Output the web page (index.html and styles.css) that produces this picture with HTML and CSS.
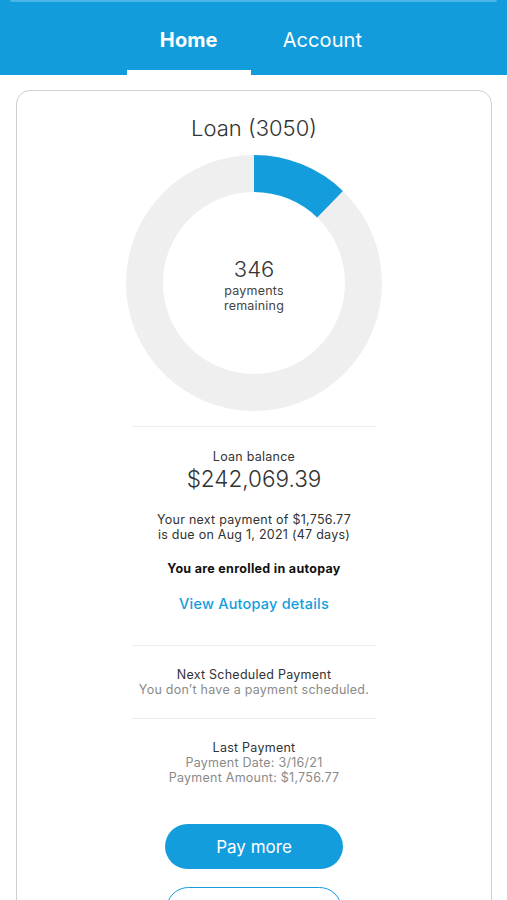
FILE: index.html
```html
<!DOCTYPE html>
<html>
<head>
<meta charset="utf-8">
<link rel="stylesheet" href="styles.css">
</head>
<body>
<header class="header">
  <div class="topstrip"></div>
  <nav class="tabs">
    <div class="tab active">Home</div>
    <div class="tab">Account</div>
  </nav>
</header>
<main class="card">
  <h1 class="title">Loan (3050)</h1>
  <div class="donut">
    <svg width="256" height="256" viewBox="0 0 256 256">
      <circle cx="128" cy="128" r="109.5" fill="none" stroke="#efefef" stroke-width="37"/>
      <circle cx="128" cy="128" r="109.5" fill="none" stroke="#139ddd" stroke-width="37" stroke-dasharray="84 700" transform="rotate(-90 128 128)"/>
    </svg>
    <div class="donut-label">
      <div class="count">346</div>
      <div class="count-sub">payments<br>remaining</div>
    </div>
  </div>
  <hr class="divider first">
  <section class="balance">
    <div class="small dark">Loan balance</div>
    <div class="amount">$242,069.39</div>
  </section>
  <p class="small dark next">Your next payment of $1,756.77<br>is due on Aug 1, 2021 (47 days)</p>
  <p class="small bold">You are enrolled in autopay</p>
  <a class="link">View Autopay details</a>
  <hr class="divider">
  <section class="info">
    <div class="small dark">Next Scheduled Payment</div>
    <div class="small grey">You don’t have a payment scheduled.</div>
  </section>
  <hr class="divider">
  <section class="info">
    <div class="small dark">Last Payment</div>
    <div class="small grey">Payment Date: 3/16/21</div>
    <div class="small grey">Payment Amount: $1,756.77</div>
  </section>
  <button class="btn primary">Pay more</button>
  <button class="btn outline">&nbsp;</button>
</main>
</body>
</html>
```
FILE: styles.css
```css
* { box-sizing: border-box; }
html, body { margin: 0; padding: 0; background: #fff; }
body {
  font-family: Inter, "Noto Sans", sans-serif;
  color: #333;
  width: 507px;
  height: 900px;
  overflow: hidden;
}
.header {
  background: #139cdc;
  height: 75px;
  position: relative;
}
.topstrip {
  position: absolute;
  left: 10px;
  right: 10px;
  top: 0;
  height: 2px;
  background: #4db4e8;
  border-radius: 0 0 2px 2px;
}
.tabs {
  display: flex;
  justify-content: center;
  height: 75px;
  padding-left: 14px;
}
.tab {
  color: #fff;
  font-size: 20px;
  padding: 28px 32px 0;
  height: 75px;
  border-bottom: 5px solid transparent;
  letter-spacing: 0.1px;
}
.tab.active {
  font-weight: 700;
  border-bottom-color: #fff;
  padding: 28px 33px 0 33px;
}
.card {
  margin: 15px 15px 0 16px;
  border: 1.5px solid #cfcfcf;
  border-radius: 14px;
  padding: 23px 0 40px;
  display: flex;
  flex-direction: column;
  align-items: center;
  text-align: center;
}
.title {
  margin: 0;
  font-size: 22px;
  line-height: 28px;
  font-weight: 300;
  color: #333;
}
.donut {
  margin-top: 13px;
  width: 256px;
  height: 256px;
  position: relative;
}
.donut svg { display: block; }
.donut-label {
  position: absolute;
  inset: 0;
  display: flex;
  flex-direction: column;
  align-items: center;
  justify-content: center;
  padding-top: 2px;
}
.count {
  font-size: 22px;
  line-height: 26px;
  font-weight: 300;
  color: #333;
}
.count-sub {
  font-size: 12.5px;
  line-height: 15px;
  color: #444;
  margin-top: 1px;
  letter-spacing: 0.2px;
}
.divider {
  width: 244px;
  border: 0;
  border-top: 1.5px solid #ededed;
  margin: 32px 0 0;
}
.divider.first { margin-top: 15px; }
.small {
  font-size: 12.5px;
  line-height: 15px;
  letter-spacing: 0.25px;
}
.dark { color: #333; }
.grey { color: #8a8a8a; }
.bold { font-weight: 700; color: #111; margin: 19px 0 0; letter-spacing: 0.3px; }
.balance { margin-top: 22px; }
.amount {
  font-size: 22.5px;
  line-height: 30px;
  font-weight: 300;
  color: #333;
}
.next { margin: 18px 0 0; }
.link {
  margin-top: 19px;
  font-size: 14.5px;
  line-height: 18px;
  color: #139ddd;
  font-weight: 500;
  letter-spacing: 0.2px;
}
.info { margin-top: 21px; }
.info + .divider { margin-top: 21px; }
.btn {
  font-family: inherit;
  width: 178px;
  height: 45px;
  border-radius: 23px;
  font-size: 17px;
  font-weight: 400;
}
.primary {
  margin-top: 39px;
  background: #139ddd;
  color: #fff;
  border: 0;
}
.outline {
  margin-top: 18px;
  background: #fff;
  border: 1.5px solid #139ddd;
  width: 176px;
}
```
